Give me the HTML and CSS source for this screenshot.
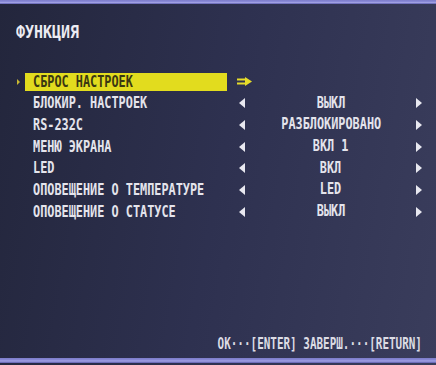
FILE: index.html
```html
<!DOCTYPE html>
<html lang="ru">
<head>
    <meta charset="UTF-8">
    <title>ФУНКЦИЯ</title>
    <link rel="stylesheet" href="styles.css">
</head>
<body>

<div class="screen">
    <div class="band"></div>

    <h1 class="title"><span class="cond">ФУНКЦИЯ</span></h1>

    <div class="menu">
        <div class="row selected">
            <span class="pointer"></span>
            <span class="label"><span class="cond">СБРОС НАСТРОЕК</span></span>
            <span class="go">
                <svg width="15" height="9" viewBox="0 0 15 9">
                    <rect x="0" y="1.5" width="8" height="2" fill="#e6dc2a"/>
                    <rect x="0" y="5.5" width="8" height="2" fill="#e6dc2a"/>
                    <polygon points="8,0 15,4.5 8,9" fill="#e6dc2a"/>
                </svg>
            </span>
        </div>
        <div class="row">
            <span class="pointer"></span>
            <span class="label"><span class="cond">БЛОКИР. НАСТРОЕК</span></span>
            <span class="prev"></span>
            <span class="value"><span class="cond">ВЫКЛ</span></span>
            <span class="next"></span>
        </div>
        <div class="row">
            <span class="pointer"></span>
            <span class="label"><span class="cond">RS-232C</span></span>
            <span class="prev"></span>
            <span class="value"><span class="cond">РАЗБЛОКИРОВАНО</span></span>
            <span class="next"></span>
        </div>
        <div class="row">
            <span class="pointer"></span>
            <span class="label"><span class="cond">МЕНЮ ЭКРАНА</span></span>
            <span class="prev"></span>
            <span class="value"><span class="cond">ВКЛ 1</span></span>
            <span class="next"></span>
        </div>
        <div class="row">
            <span class="pointer"></span>
            <span class="label"><span class="cond">LED</span></span>
            <span class="prev"></span>
            <span class="value"><span class="cond">ВКЛ</span></span>
            <span class="next"></span>
        </div>
        <div class="row">
            <span class="pointer"></span>
            <span class="label"><span class="cond">ОПОВЕЩЕНИЕ О ТЕМПЕРАТУРЕ</span></span>
            <span class="prev"></span>
            <span class="value"><span class="cond">LED</span></span>
            <span class="next"></span>
        </div>
        <div class="row">
            <span class="pointer"></span>
            <span class="label"><span class="cond">ОПОВЕЩЕНИЕ О СТАТУСЕ</span></span>
            <span class="prev"></span>
            <span class="value"><span class="cond">ВЫКЛ</span></span>
            <span class="next"></span>
        </div>
    </div>

    <div class="footer"><span class="cond">OK···[ENTER] ЗАВЕРШ.···[RETURN]</span></div>

    <div class="band bottom"></div>
</div>

</body>
</html>
```

FILE: styles.css
```css
body {
    margin: 0;
    font-family: 'DejaVu Sans Mono', 'Liberation Mono', monospace;
    font-weight: bold;
}
.screen {
    width: 436px;
    height: 365px;
    display: flex;
    flex-direction: column;
    background: linear-gradient(100deg, #23263c 0%, #2e3150 50%, #3a3d5c 100%);
    overflow: hidden;
}
.band {
    height: 4px;
    flex: none;
    background: linear-gradient(#7c7cc8, #8a8ad8 40%, #a4a4e6 60%, #5c5cac);
}
.band.bottom {
    height: 5px;
    margin-bottom: 2px;
}
.cond {
    display: inline-block;
    white-space: pre;
    transform: scaleX(0.79);
    transform-origin: left center;
}
.title {
    margin: 18px 0 0 16px;
    font-size: 17px;
    line-height: 20px;
    font-weight: bold;
    color: #ecebf2;
}
.title .cond {
    transform: scaleX(0.88);
}
.menu {
    margin-top: 29px;
    padding: 0 13px 0 16px;
}
.row {
    display: grid;
    grid-template-columns: 9px 202px 10px 9px 1fr 7px;
    align-items: center;
    height: 21.67px;
    font-size: 15px;
    line-height: 21.67px;
    color: #e4e4ec;
}
.label {
    grid-column: 2;
    height: 18px;
    padding-left: 8px;
    line-height: 18px;
    overflow: visible;
    white-space: nowrap;
}
.selected .label {
    background: #e2dc1e;
    color: #3a3812;
}
.selected .pointer {
    justify-self: start;
    margin-left: 1px;
    width: 0;
    height: 0;
    border-top: 3px solid transparent;
    border-bottom: 3px solid transparent;
    border-left: 3px solid #c8b832;
}
.go {
    grid-column: 4 / 6;
    display: flex;
    align-items: center;
}
.go svg {
    display: block;
}
.prev {
    grid-column: 4;
    justify-self: start;
    margin-left: 2px;
    width: 0;
    height: 0;
    border-top: 5px solid transparent;
    border-bottom: 5px solid transparent;
    border-right: 6px solid #e8e8f0;
}
.next {
    grid-column: 6;
    justify-self: start;
    width: 0;
    height: 0;
    border-top: 5px solid transparent;
    border-bottom: 5px solid transparent;
    border-left: 6px solid #e8e8f0;
}
.value {
    grid-column: 5;
    text-align: center;
    white-space: nowrap;
}
.value .cond {
    transform-origin: center center;
}
.footer {
    margin-top: auto;
    margin-bottom: 4px;
    padding-right: 14px;
    text-align: right;
    font-size: 15px;
    line-height: 20px;
    color: #dcdce4;
}
.footer .cond {
    transform: scaleX(0.73);
    transform-origin: right center;
}
```
